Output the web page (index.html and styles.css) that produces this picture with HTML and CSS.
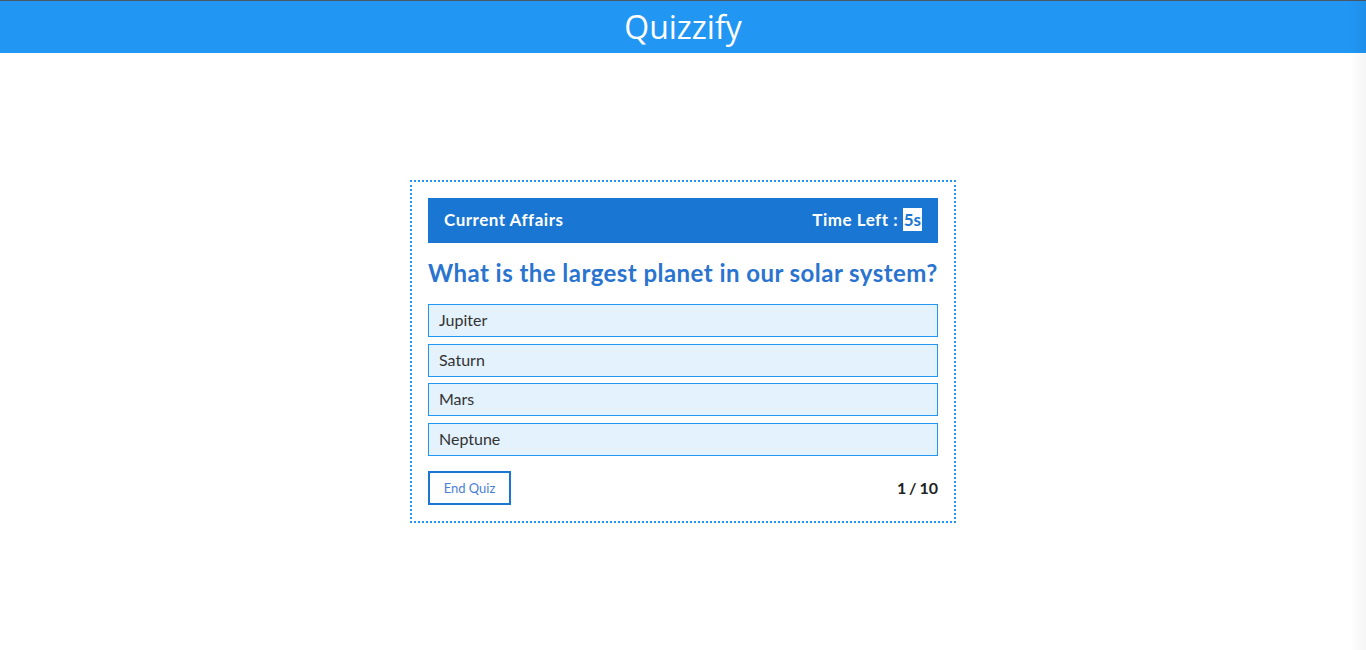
FILE: index.html
```html
<!DOCTYPE html>
<html lang="en">
<head>
<meta charset="utf-8">
<title>Quizzify</title>
<link rel="stylesheet" href="styles.css">
</head>
<body>
<header class="topbar"><h1 class="brand">Quizzify</h1></header>
<main class="stage">
  <section class="quiz-card">
    <div class="quiz-head">
      <span class="category">Current Affairs</span>
      <span class="timer">Time Left : <span class="timer-val">5s</span></span>
    </div>
    <h2 class="question">What is the largest planet in our solar system?</h2>
    <ul class="options">
      <li class="option">Jupiter</li>
      <li class="option">Saturn</li>
      <li class="option">Mars</li>
      <li class="option">Neptune</li>
    </ul>
    <div class="quiz-foot">
      <button class="end-btn">End Quiz</button>
      <span class="progress">1 / 10</span>
    </div>
  </section>
</main>
<div class="edge-shade"></div>
</body>
</html>
```
FILE: styles.css
```css
* { box-sizing: border-box; }
html, body { margin: 0; padding: 0; height: 100%; }
body {
  font-family: Lato, "Noto Sans", sans-serif;
  background: #fff;
  display: flex;
  flex-direction: column;
  overflow: hidden;
}
.topbar {
  height: 53px;
  background: #2196f3;
  border-top: 1px solid #4b5866;
  display: flex;
  align-items: center;
  justify-content: center;
  flex: none;
}
.brand {
  margin: 0;
  color: #fff;
  font-family: "Open Sans", sans-serif;
  font-weight: 400;
  font-size: 32px;
  line-height: 1;
}
.stage {
  flex: 1;
  display: flex;
  align-items: center;
  justify-content: center;
}
.quiz-card {
  width: 546px;
  border: 2px dotted #2196f3;
  padding: 16px 16px 16px;
}
.quiz-head {
  height: 45px;
  background: #1976d2;
  color: #fff;
  display: flex;
  align-items: center;
  justify-content: space-between;
  padding: 0 16px 3px;
  font-weight: 700;
  font-size: 17px;
  letter-spacing: 0.5px;
}
.timer-val {
  background: #fff;
  color: #1976d2;
  padding: 1px 1px;
  letter-spacing: 0;
}
.question {
  margin: 14px 0 16px;
  color: #2a74d0;
  font-size: 24px;
  font-weight: 700;
  line-height: 31px;
  letter-spacing: 0.45px;
  white-space: nowrap;
}
.options {
  list-style: none;
  margin: 0;
  padding: 0;
  display: flex;
  flex-direction: column;
  gap: 6.5px;
}
.option {
  height: 33px;
  border: 1px solid #2196f3;
  background: #e3f2fd;
  color: #333;
  font-size: 16px;
  padding: 0 10px 2px;
  display: flex;
  align-items: center;
}
.quiz-foot {
  margin-top: 15px;
  display: flex;
  align-items: center;
  justify-content: space-between;
}
.end-btn {
  width: 83px;
  height: 34px;
  border: 2px solid #1976d2;
  background: #fff;
  color: #4a7fd6;
  font-family: inherit;
  font-size: 13px;
  padding: 0;
}
.progress {
  font-weight: 700;
  font-size: 16px;
  color: #222;
  word-spacing: -1px;
}
.edge-shade {
  position: fixed;
  top: 0;
  right: 0;
  width: 16px;
  height: 100%;
  background: linear-gradient(to right, rgba(0,0,0,0), rgba(0,0,0,0.04));
  pointer-events: none;
}
```
